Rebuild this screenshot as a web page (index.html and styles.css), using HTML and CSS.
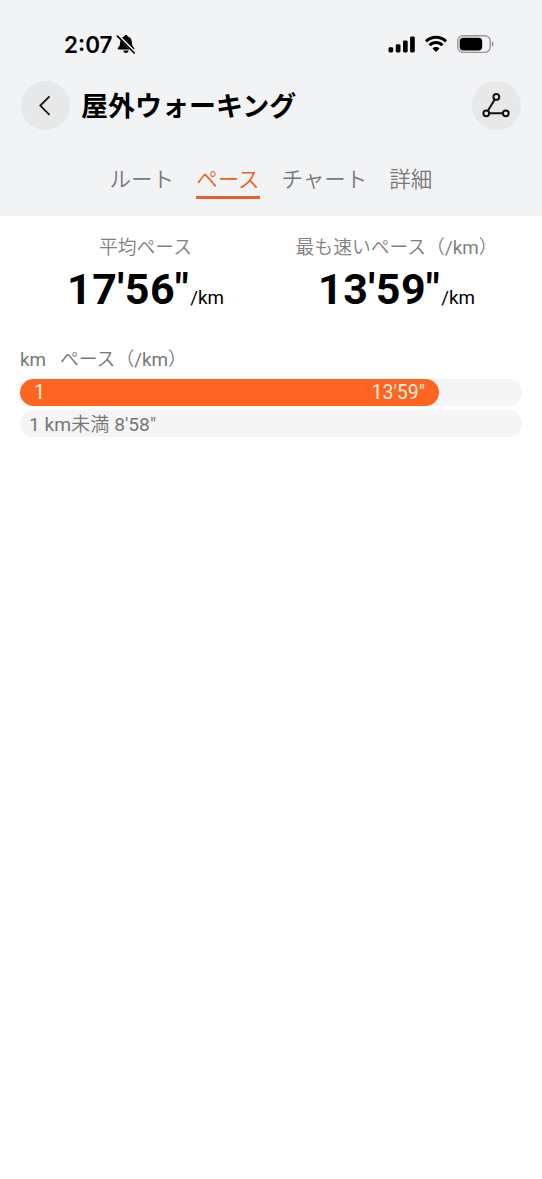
FILE: index.html
```html
<!DOCTYPE html>
<html lang="ja">
<head>
<meta charset="utf-8">
<title>屋外ウォーキング</title>
<link rel="stylesheet" href="styles.css">
</head>
<body>
<header class="header">
  <div class="status">
    <span class="clock">2:07</span>
    <svg class="bell" width="20" height="20" viewBox="0 0 20 20"><path d="M10 0.900c1 0 1.700.6 1.800 1.500 2.600.8 3.900 2.700 4 5.300.1 3.300.6 4.400 2.200 6 .6.7.3 1.700-.7 1.700H2.700c-1 0-1.300-1-.7-1.700 1.600-1.600 2.100-2.700 2.200-6 .1-2.600 1.400-4.500 4-5.300C8.300 1.500 9 .9 10 .9zM7.300 16.500h5.400c-.2 1.500-1.300 2.500-2.700 2.500s-2.500-1-2.700-2.500z"/><path class="bell-gap" d="M2.200 1.900L18.800 18.500"/><path class="bell-slash" d="M1.400 2.200L18.200 19"/></svg>
    <svg class="signal" width="27" height="17" viewBox="0 0 27 17"><rect x="0.500" y="11.300" width="4.700" height="5.200" rx="1.400"/><rect x="7.800" y="8.300" width="4.700" height="8.200" rx="1.400"/><rect x="15" y="4.500" width="4.700" height="12" rx="1.400"/><rect x="22.100" y="0.500" width="4.700" height="16" rx="1.400"/></svg>
    <svg class="wifi" width="24" height="18" viewBox="0 0 24 18"><path class="wave" d="M2 6.400C7.400.8 16.600.8 22 6.400M5.600 10.200c3.600-3.700 9.200-3.700 12.800 0"/><path d="M12 17l-3.500-3.600c2-1.900 5-1.900 7 0z"/></svg>
    <svg class="battery" width="38" height="19" viewBox="0 0 38 19"><rect class="shell" x="0.800" y="0.800" width="32.400" height="16.600" rx="5.300"/><rect x="2.700" y="2.800" width="22.500" height="12.600" rx="3.700"/><path class="tip" d="M34.900 6.300c2.300.8 2.300 4.800 0 5.600z"/></svg>
  </div>
  <div class="titlebar">
    <button class="round" aria-label="戻る"><svg width="49" height="49" viewBox="0 0 49 49"><path class="chevron" d="M28.500 15.300L19.300 24.600L28.500 33.900"/></svg></button>
    <h1 class="title">屋外ウォーキング</h1>
    <button class="round" aria-label="軌跡"><svg width="49" height="49" viewBox="0 0 49 49"><g class="track"><circle cx="24.300" cy="15.900" r="2.900"/><circle cx="14.300" cy="32.300" r="2.900"/><circle cx="33.800" cy="32.300" r="2.900"/><path d="M22.700 18.500L15.900 29.700M17.300 32.300H30.800"/></g></svg></button>
  </div>
  <nav class="tabs">
    <span class="tab">ルート</span>
    <span class="tab active">ペース</span>
    <span class="tab">チャート</span>
    <span class="tab">詳細</span>
  </nav>
</header>
<main>
  <section class="stats">
    <div class="stat"><div class="label">平均ペース</div><div class="value">17'56"<span class="unit">/km</span></div></div>
    <div class="stat"><div class="label">最も速いペース（<span class="latin">/km</span>）</div><div class="value">13'59"<span class="unit">/km</span></div></div>
  </section>
  <section class="laps">
    <div class="laps-head"><span class="col-km latin">km</span><span>ペース（<span class="latin">/km</span>）</span></div>
    <div class="track-bar"><div class="fill"><span>1</span><span>13'59"</span></div></div>
    <div class="track-bar rest"><span class="latin">1 km</span>未満 <span class="latin">8'58"</span></div>
  </section>
</main>
</body>
</html>
```
FILE: styles.css
```css
* { box-sizing: border-box; }
body {
  margin: 0;
  min-height: 1179px;
  background: #fff;
  color: #000;
  font-family: Roboto, "Noto Sans CJK JP", sans-serif;
}
svg { display: block; }
.header { height: 216px; background: #f2f3f5; }
.status { display: flex; height: 81px; padding: 34px 47px 0 64px; align-items: flex-start; }
.clock {
  width: 50px;
  font: 600 22.5px/21px Inter, sans-serif;
  white-space: nowrap;
}
.bell { margin-left: 2px; }
.bell-gap { stroke: #f2f3f5; stroke-width: 3; }
.bell-slash { stroke: #000; stroke-width: 1.700; stroke-linecap: round; }
.signal { margin: 2px 0 0 auto; }
.wifi { margin: 1px 0 0 9px; }
.wave { fill: none; stroke: #000; stroke-width: 3; }
.battery { margin: 1px 0 0 9px; }
.shell { fill: none; stroke: #96979a; stroke-width: 1.400; }
.tip { fill: #96979a; }
.titlebar { display: flex; height: 49px; padding: 0 21px; align-items: center; }
.round {
  width: 49px;
  height: 49px;
  padding: 0;
  border: 0;
  border-radius: 50%;
  background: #e7e8ea;
}
.chevron { fill: none; stroke: #111; stroke-width: 1.800; }
.track { fill: none; stroke: #111; stroke-width: 2; }
.title {
  flex: 1;
  margin: 0 0 2px 11px;
  font: 700 27px/47px "Noto Sans CJK JP", sans-serif;
}
.tabs { display: flex; justify-content: center; gap: 22px; padding-top: 33px; }
.tab {
  height: 36px;
  font: 350 21.500px/29px "Noto Sans CJK JP", sans-serif;
  color: #77787a;
}
.active { color: #f1601f; border-bottom: 3px solid #e9622b; }
.stats { display: grid; grid-template-columns: 251px 251px; padding: 17px 20px 0; height: 128px; }
.stat { text-align: center; white-space: nowrap; }
.label { height: 28px; font: 350 18.800px/31px Roboto, "Noto Sans CJK JP", sans-serif; color: #7f7f7f; }
.latin { font-weight: 400; }
.value { font-weight: 700; font-size: 43px; line-height: 56px; letter-spacing: 0.500px; }
.unit { margin-left: 1px; font-weight: 400; font-size: 18.800px; letter-spacing: 0; }
.laps { padding: 0 20px; }
.laps-head { display: flex; height: 35px; font: 350 18.800px/32px Roboto, "Noto Sans CJK JP", sans-serif; color: #777; }
.col-km { width: 40px; }
.track-bar { height: 27px; margin-bottom: 4px; border-radius: 14px; background: #f5f5f5; }
.fill {
  display: flex;
  justify-content: space-between;
  width: 419px;
  height: 27px;
  padding: 0 14px;
  border-radius: 14px;
  background: #ff6420;
  color: #fff0dc;
  font-size: 19.500px;
  line-height: 28px;
}
.rest { padding-left: 9px; font: 350 19.200px/29px Roboto, "Noto Sans CJK JP", sans-serif; color: #777; }
```
